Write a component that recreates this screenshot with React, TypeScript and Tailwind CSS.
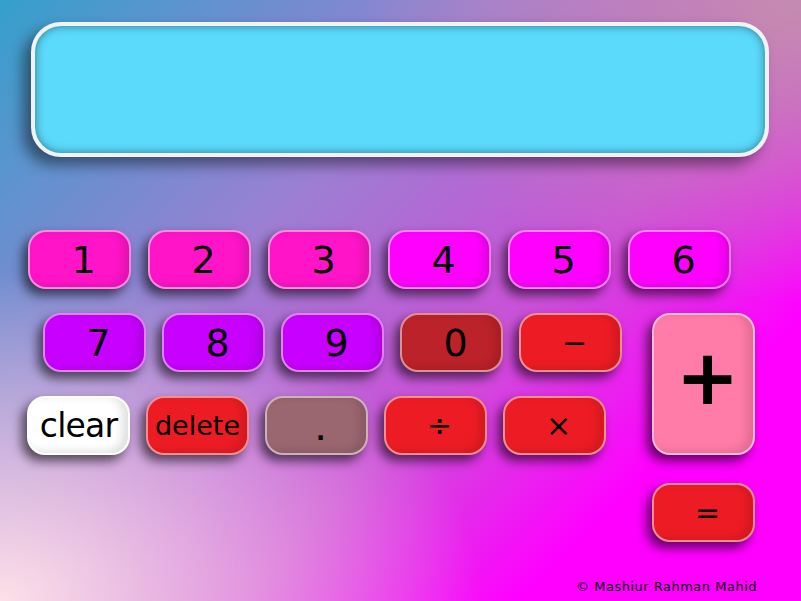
const keyBase =
  "flex items-center justify-center h-[59px] w-[103px] rounded-[18px] border-2 border-white/50 text-black shadow-[-5px_6px_11px_rgba(0,0,0,0.6),inset_-6px_-2px_8px_rgba(0,0,0,0.12)]";

function Key({ label, color, text = "text-[38px]", className = "" }: { label: string; color: string; text?: string; className?: string }) {
  return (
    <button className={`${keyBase} ${color} ${text} ${className} leading-none pl-2`}>
      {label}
    </button>
  );
}

export default function App() {
  return (
    <main
      className="relative h-[601px] w-[801px] overflow-hidden bg-[radial-gradient(ellipse_60%_55%_at_0%_100%,#fde0e8_0%,rgba(253,224,232,0.6)_40%,rgba(253,224,232,0)_100%),radial-gradient(ellipse_55%_50%_at_100%_0%,#c58caf_0%,rgba(197,140,175,0)_100%),linear-gradient(135deg,#35a0cc_0%,#9c7fd2_35%,#cc50d8_60%,#ff00ff_80%)]"
      style={{ fontFamily: '"DejaVu Sans", "Liberation Sans", sans-serif' }}
    >
      <div className="ml-[31px] mt-[22px] h-[135px] w-[738px] rounded-[30px] border-4 border-[#f2f2f2] bg-[#5bdafc] shadow-[-8px_8px_14px_rgba(0,0,0,0.45),inset_0_0_10px_rgba(0,0,0,0.45)]" />

      <div className="mt-[73px] ml-[28px] flex gap-[17px]">
        <Key label="1" color="bg-[#ff14c8]" />
        <Key label="2" color="bg-[#ff14c8]" />
        <Key label="3" color="bg-[#ff14c8]" />
        <Key label="4" color="bg-[#ff00ff]" />
        <Key label="5" color="bg-[#ff00ff]" />
        <Key label="6" color="bg-[#ff00ff]" />
      </div>

      <div className="mt-[24px] flex">
        <div className="flex flex-col gap-[24px]">
          <div className="ml-[43px] flex gap-[16px]">
            <Key label="7" color="bg-[#c800ff]" />
            <Key label="8" color="bg-[#c800ff]" />
            <Key label="9" color="bg-[#c800ff]" />
            <Key label="0" color="bg-[#bc2229]" />
            <Key label="−" color="bg-[#ed1c24]" text="text-[30px]" />
          </div>
          <div className="ml-[27px] flex gap-[16px]">
            <Key label="clear" color="bg-white" text="text-[33px]" className="!pl-0 tracking-tight" />
            <Key label="delete" color="bg-[#ed1c24]" text="text-[27px]" className="!pl-0" />
            <Key label="." color="bg-[#9a6670]" text="text-[24px] font-bold" className="pt-3" />
            <Key label="÷" color="bg-[#ed1c24]" text="text-[30px]" />
            <Key label="×" color="bg-[#ed1c24]" text="text-[30px]" />
          </div>
        </div>
        <div className="ml-[30px] flex flex-col gap-[28px]">
          <button className={`${keyBase} !h-[142px] bg-[#ff7ba8] text-[76px] font-bold leading-none pl-2 pb-3`}>+</button>
          <Key label="=" color="bg-[#ed1c24]" text="text-[30px]" />
        </div>
      </div>

      <p className="absolute bottom-[8px] right-[44px] text-[13px] tracking-[0.5px] leading-none text-black">
        © Mashiur Rahman Mahid
      </p>
    </main>
  );
}
